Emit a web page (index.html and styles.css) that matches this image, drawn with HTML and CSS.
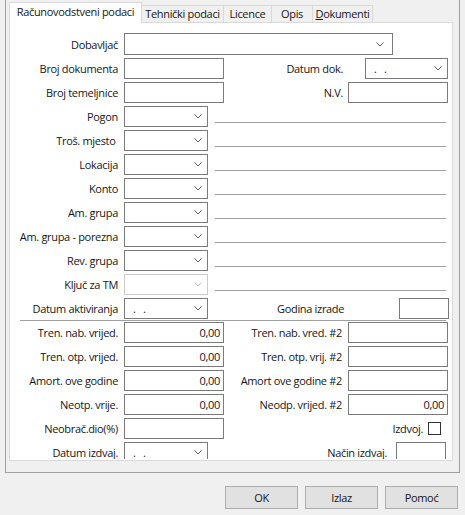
FILE: index.html
```html
<!DOCTYPE html>
<html>
<head>
<meta charset="utf-8">
<link rel="stylesheet" href="styles.css">
</head>
<body>
<div class="frame">
  <div class="tabs">
    <div class="tab active">Računovodstveni podaci</div>
    <div class="tab t2">Tehnički podaci</div>
    <div class="tab t3">Licence</div>
    <div class="tab t4">Opis</div>
    <div class="tab t5"><u>D</u>okumenti</div>
  </div>
  <div class="page">
    <div class="clip">
      <div class="upper">
        <div class="row row-first">
          <div class="lbl">Dobavljač</div>
          <div class="combo w-dob"><span></span><svg class="chev" width="8" height="5" viewBox="0 0 8 5"><path d="M0.5 0.5 L4 4 L7.5 0.5" fill="none" stroke="#606060"/></svg></div>
        </div>
        <div class="row">
          <div class="lbl">Broj dokumenta</div>
          <div class="input w100"></div>
          <div class="rlbl"><span>Datum dok.</span></div>
          <div class="combo w83 ml22"><span class="mask">.&nbsp;&nbsp;.</span><svg class="chev" width="8" height="5" viewBox="0 0 8 5"><path d="M0.5 0.5 L4 4 L7.5 0.5" fill="none" stroke="#606060"/></svg></div>
        </div>
        <div class="row">
          <div class="lbl">Broj temeljnice</div>
          <div class="input w100"></div>
          <div class="rlbl"><span>N.V.</span></div>
          <div class="input w100 ml5"></div>
        </div>
        <div class="row">
          <div class="lbl">Pogon</div>
          <div class="combo w84"><span></span><svg class="chev" width="8" height="5" viewBox="0 0 8 5"><path d="M0.5 0.5 L4 4 L7.5 0.5" fill="none" stroke="#606060"/></svg></div>
          <div class="uline"></div>
        </div>
        <div class="row">
          <div class="lbl">Troš. mjesto&nbsp;</div>
          <div class="combo w84"><span></span><svg class="chev" width="8" height="5" viewBox="0 0 8 5"><path d="M0.5 0.5 L4 4 L7.5 0.5" fill="none" stroke="#606060"/></svg></div>
          <div class="uline"></div>
        </div>
        <div class="row">
          <div class="lbl">Lokacija</div>
          <div class="combo w84"><span></span><svg class="chev" width="8" height="5" viewBox="0 0 8 5"><path d="M0.5 0.5 L4 4 L7.5 0.5" fill="none" stroke="#606060"/></svg></div>
          <div class="uline"></div>
        </div>
        <div class="row">
          <div class="lbl">Konto</div>
          <div class="combo w84"><span></span><svg class="chev" width="8" height="5" viewBox="0 0 8 5"><path d="M0.5 0.5 L4 4 L7.5 0.5" fill="none" stroke="#606060"/></svg></div>
          <div class="uline"></div>
        </div>
        <div class="row">
          <div class="lbl">Am. grupa</div>
          <div class="combo w84"><span></span><svg class="chev" width="8" height="5" viewBox="0 0 8 5"><path d="M0.5 0.5 L4 4 L7.5 0.5" fill="none" stroke="#606060"/></svg></div>
          <div class="uline"></div>
        </div>
        <div class="row">
          <div class="lbl">Am. grupa - porezna</div>
          <div class="combo w84"><span></span><svg class="chev" width="8" height="5" viewBox="0 0 8 5"><path d="M0.5 0.5 L4 4 L7.5 0.5" fill="none" stroke="#606060"/></svg></div>
          <div class="uline"></div>
        </div>
        <div class="row">
          <div class="lbl">Rev. grupa</div>
          <div class="combo w84"><span></span><svg class="chev" width="8" height="5" viewBox="0 0 8 5"><path d="M0.5 0.5 L4 4 L7.5 0.5" fill="none" stroke="#606060"/></svg></div>
          <div class="uline"></div>
        </div>
        <div class="row">
          <div class="lbl">Ključ za TM</div>
          <div class="combo w84 disabled"><span></span><svg class="chev" width="8" height="5" viewBox="0 0 8 5"><path d="M0.5 0.5 L4 4 L7.5 0.5" fill="none" stroke="#c4c4c4"/></svg></div>
          <div class="uline"></div>
        </div>
        <div class="row">
          <div class="lbl">Datum aktiviranja</div>
          <div class="combo w84"><span class="mask">.&nbsp;&nbsp;.</span><svg class="chev" width="8" height="5" viewBox="0 0 8 5"><path d="M0.5 0.5 L4 4 L7.5 0.5" fill="none" stroke="#606060"/></svg></div>
          <div class="glbl">Godina izrade</div>
          <div class="input w50 mlauto"></div>
        </div>
      </div>
      <div class="sep"></div>
      <div class="lower">
        <div class="row">
          <div class="lbl">Tren. nab. vrijed.</div>
          <div class="input w100 num">0,00</div>
          <div class="rlbl"><span>Tren. nab. vred. #2</span></div>
          <div class="input w100"></div>
        </div>
        <div class="row">
          <div class="lbl">Tren. otp. vrijed.</div>
          <div class="input w100 num">0,00</div>
          <div class="rlbl"><span>Tren. otp. vrij. #2</span></div>
          <div class="input w100"></div>
        </div>
        <div class="row">
          <div class="lbl">Amort. ove godine</div>
          <div class="input w100 num">0,00</div>
          <div class="rlbl"><span>Amort ove godine #2</span></div>
          <div class="input w100"></div>
        </div>
        <div class="row">
          <div class="lbl">Neotp. vrije.</div>
          <div class="input w100 num">0,00</div>
          <div class="rlbl"><span>Neodp. vrijed. #2</span></div>
          <div class="input w100 num">0,00</div>
        </div>
        <div class="row">
          <div class="lbl">Neobrač.dio(%)</div>
          <div class="input w100"></div>
          <div class="chklbl">Izdvoj.</div>
          <div class="check"></div>
        </div>
        <div class="row">
          <div class="lbl">Datum izdvaj.</div>
          <div class="combo w84"><span class="mask">.&nbsp;&nbsp;.</span><svg class="chev" width="8" height="5" viewBox="0 0 8 5"><path d="M0.5 0.5 L4 4 L7.5 0.5" fill="none" stroke="#606060"/></svg></div>
          <div class="nlbl">Način izdvaj.</div>
          <div class="input w50 mr2"></div>
        </div>
      </div>
    </div>
  </div>
</div>
<div class="buttons">
  <div class="btn">OK</div>
  <div class="btn">Izlaz</div>
  <div class="btn">Pomoć</div>
</div>
</body>
</html>
```

FILE: styles.css
```css
* { box-sizing: border-box; }
html, body { margin: 0; padding: 0; }
body {
  background: #f0f0f0;
  font-family: "Open Sans", "Noto Sans", sans-serif;
  font-size: 11px;
  letter-spacing: -0.32px;
  color: #161616;
  width: 465px;
  height: 515px;
  overflow: hidden;
}
.frame {
  margin-left: 5px;
  width: 455px;
  height: 473px;
  border: 1px solid #a0a0a0;
  border-top: none;
  padding-left: 3px;
  padding-top: 2px;
}
.tabs {
  display: flex;
  align-items: flex-end;
  height: 20px;
}
.tab {
  height: 17px;
  border-top: 1px solid #d9d9d9;
  border-right: 1px solid #d9d9d9;
  background: #f0f0f0;
  display: flex;
  align-items: center;
  justify-content: center;
  white-space: nowrap;
  padding-bottom: 1px;
}
.tab.active {
  width: 133px;
  height: 21px;
  margin-bottom: -1px;
  background: #fff;
  border-left: 1px solid #d9d9d9;
  position: relative;
  z-index: 1;
  padding-bottom: 3px;
}
.t2 { width: 82px; }
.t3 { width: 48px; }
.t4 { width: 41px; }
.t5 { width: 60px; }
.tab u { text-decoration: underline; text-underline-offset: 1px; }
.page {
  width: 444px;
  height: 439px;
  border: 1px solid #d9d9d9;
  background: #fff;
  padding: 0 3px 1px 0;
}
.clip {
  height: 436px;
  overflow: hidden;
  padding-top: 10px;
}
.row {
  display: flex;
  align-items: center;
  height: 21px;
  margin-bottom: 3px;
}
.row-first { height: 22px; }
.upper .row:last-child { margin-bottom: 1px; }
.sep {
  margin-left: 10px;
  width: 426px;
  height: 1px;
  background: #a0a0a0;
}
.lower {
  margin-left: 10px;
  width: 428px;
  padding-top: 1px;
}
.lbl {
  width: 108px;
  margin-right: 6px;
  text-align: right;
  white-space: nowrap;
}
.lower .lbl { width: 98px; }
.input, .combo {
  height: 21px;
  border: 1px solid #7a7a7a;
  background: #fff;
  flex: none;
}
.row-first .combo { height: 22px; }
.combo {
  display: flex;
  align-items: center;
  justify-content: space-between;
  padding: 0 5px 0 8px;
}
.w-dob { width: 269px; padding-right: 8px; }
.combo.disabled { border-color: #cccccc; }
.chev { display: block; flex: none; }
.mask { letter-spacing: 0.5px; }
.w100 { width: 100px; }
.w84 { width: 84px; }
.w83 { width: 83px; }
.w50 { width: 50px; }
.ml22 { margin-left: 22px; }
.ml5 { margin-left: 5px; }
.mlauto { margin-left: auto; }
.mr2 { margin-right: 2px; }
.num {
  display: flex;
  align-items: center;
  justify-content: flex-end;
  padding-right: 3px;
}
.rlbl {
  flex: none;
  margin-left: 17px;
  width: 102px;
  display: flex;
  justify-content: flex-end;
  overflow: hidden;
  white-space: nowrap;
}
.rlbl span { flex: none; }
.lower .rlbl { width: 101px; margin-right: 6px; }
.uline {
  flex: none;
  align-self: flex-end;
  margin-left: 7px;
  margin-bottom: 4px;
  width: 231px;
  height: 1px;
  background: #a0a0a0;
}
.glbl { margin-left: 69px; white-space: nowrap; }
.chklbl { margin-left: auto; margin-right: 5px; }
.check {
  width: 13px;
  height: 13px;
  border: 1px solid #333;
  background: #fff;
  margin-right: 7px;
}
.nlbl { margin-left: auto; margin-right: 9px; white-space: nowrap; }
.buttons {
  display: flex;
  justify-content: flex-end;
  gap: 7px;
  margin-top: 13px;
  padding-right: 7px;
}
.btn {
  width: 73px;
  height: 23px;
  background: #e1e1e1;
  border: 1px solid #adadad;
  display: flex;
  align-items: center;
  justify-content: center;
}
```
